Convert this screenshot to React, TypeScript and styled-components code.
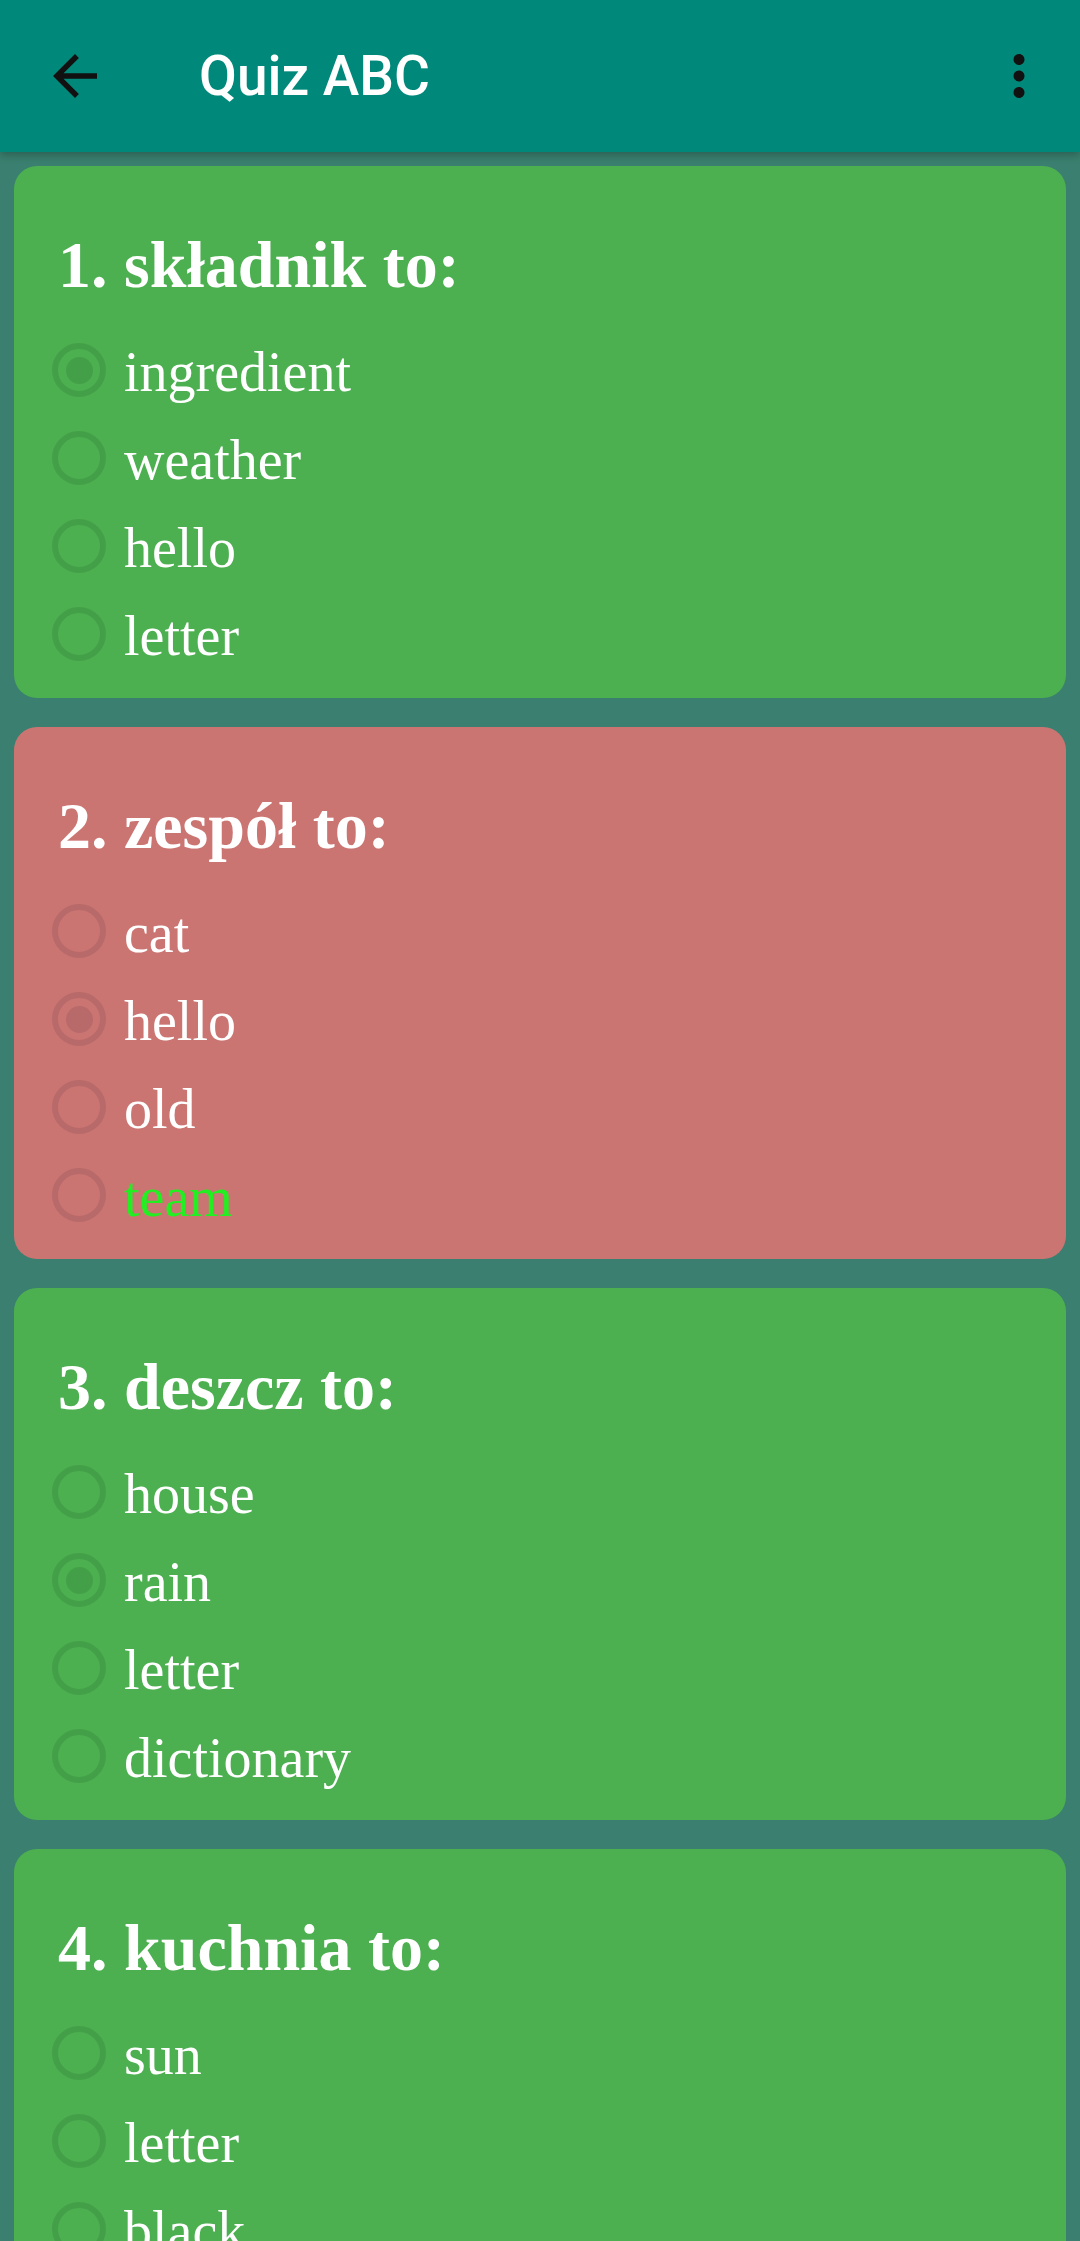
import styled, { createGlobalStyle } from "styled-components";

const GlobalStyle = createGlobalStyle`
  html, body {
    margin: 0;
    padding: 0;
    background: #3a7f6f;
  }
  * {
    box-sizing: border-box;
  }
`;

type Question = {
  word: string;
  options: string[];
  checked: number;
  correct: number;
};

const questions: Question[] = [
  { word: "składnik", options: ["ingredient", "weather", "hello", "letter"], checked: 0, correct: 0 },
  { word: "zespół", options: ["cat", "hello", "old", "team"], checked: 1, correct: 3 },
  { word: "deszcz", options: ["house", "rain", "letter", "dictionary"], checked: 1, correct: 1 },
  { word: "kuchnia", options: ["sun", "letter", "black", "kitchen"], checked: -1, correct: 3 },
];

const PageContainer = styled.div`
  width: 1080px;
  height: 2241px;
  overflow: hidden;
  background: #3a7f6f;
`;

const Toolbar = styled.header`
  position: relative;
  z-index: 1;
  height: 152px;
  display: flex;
  align-items: center;
  padding: 0 28px 0 42px;
  background: #00897b;
  box-shadow: 0 3px 8px rgba(0, 0, 0, 0.25);
`;

const IconButton = styled.div`
  width: 66px;
  height: 66px;
  display: flex;
  align-items: center;
  justify-content: center;
  color: #111;
`;

const ToolbarTitle = styled.h1`
  flex: 1;
  margin: 0 0 0 91px;
  font-family: Roboto, "Noto Sans", sans-serif;
  font-weight: 500;
  font-size: 55px;
  color: #fff;
  line-height: 1;
`;

const List = styled.main`
  display: flex;
  flex-direction: column;
  gap: 29px;
  padding: 14px 14px 0;
`;

const Card = styled.section<{ $wrong: boolean }>`
  height: 532px;
  flex-shrink: 0;
  border-radius: 23px;
  padding: 60px 20px 20px 38px;
  background: ${({ $wrong }) => ($wrong ? "#cb7573" : "#4caf50")};
`;

const CardTitle = styled.h2`
  margin: 0 0 22px 6px;
  font-family: "Liberation Serif", serif;
  font-weight: 700;
  font-size: 66px;
  line-height: 78px;
  color: #fff;
`;

const OptionRow = styled.label`
  height: 88px;
  display: flex;
  align-items: center;
  gap: 18px;
`;

const Radio = styled.span<{ $wrong: boolean; $checked: boolean }>`
  width: 54px;
  height: 54px;
  flex-shrink: 0;
  border-radius: 50%;
  border: 6px solid ${({ $wrong }) => ($wrong ? "#b86a6a" : "#44a048")};
  display: flex;
  align-items: center;
  justify-content: center;

  &::after {
    content: "";
    width: 27px;
    height: 27px;
    border-radius: 50%;
    background: ${({ $wrong }) => ($wrong ? "#b86a6a" : "#44a048")};
    display: ${({ $checked }) => ($checked ? "block" : "none")};
  }
`;

const OptionText = styled.span<{ $highlight: boolean }>`
  padding-top: 4px;
  font-family: "Liberation Serif", serif;
  font-size: 56px;
  line-height: 1;
  color: ${({ $highlight }) => ($highlight ? "#22ee22" : "#fff")};
`;

const App = () => {
  return (
    <PageContainer>
      <GlobalStyle />
      <Toolbar>
        <IconButton>
          <svg width="66" height="66" viewBox="0 0 24 24" fill="currentColor">
            <path d="M20 11H7.83l5.59-5.59L12 4l-8 8 8 8 1.41-1.41L7.83 13H20v-2z" />
          </svg>
        </IconButton>
        <ToolbarTitle>Quiz ABC</ToolbarTitle>
        <IconButton>
          <svg width="66" height="66" viewBox="0 0 24 24" fill="currentColor">
            <path d="M12 8c1.1 0 2-.9 2-2s-.9-2-2-2-2 .9-2 2 .9 2 2 2zm0 2c-1.1 0-2 .9-2 2s.9 2 2 2 2-.9 2-2-.9-2-2-2zm0 6c-1.1 0-2 .9-2 2s.9 2 2 2 2-.9 2-2-.9-2-2-2z" />
          </svg>
        </IconButton>
      </Toolbar>
      <List>
        {questions.map((q, qi) => {
          const wrong = q.checked !== -1 && q.checked !== q.correct;
          return (
            <Card key={q.word} $wrong={wrong}>
              <CardTitle>
                {qi + 1}. {q.word} to:
              </CardTitle>
              {q.options.map((opt, oi) => (
                <OptionRow key={opt}>
                  <Radio $wrong={wrong} $checked={oi === q.checked} />
                  <OptionText $highlight={wrong && oi === q.correct}>{opt}</OptionText>
                </OptionRow>
              ))}
            </Card>
          );
        })}
      </List>
    </PageContainer>
  );
};

export default App;
